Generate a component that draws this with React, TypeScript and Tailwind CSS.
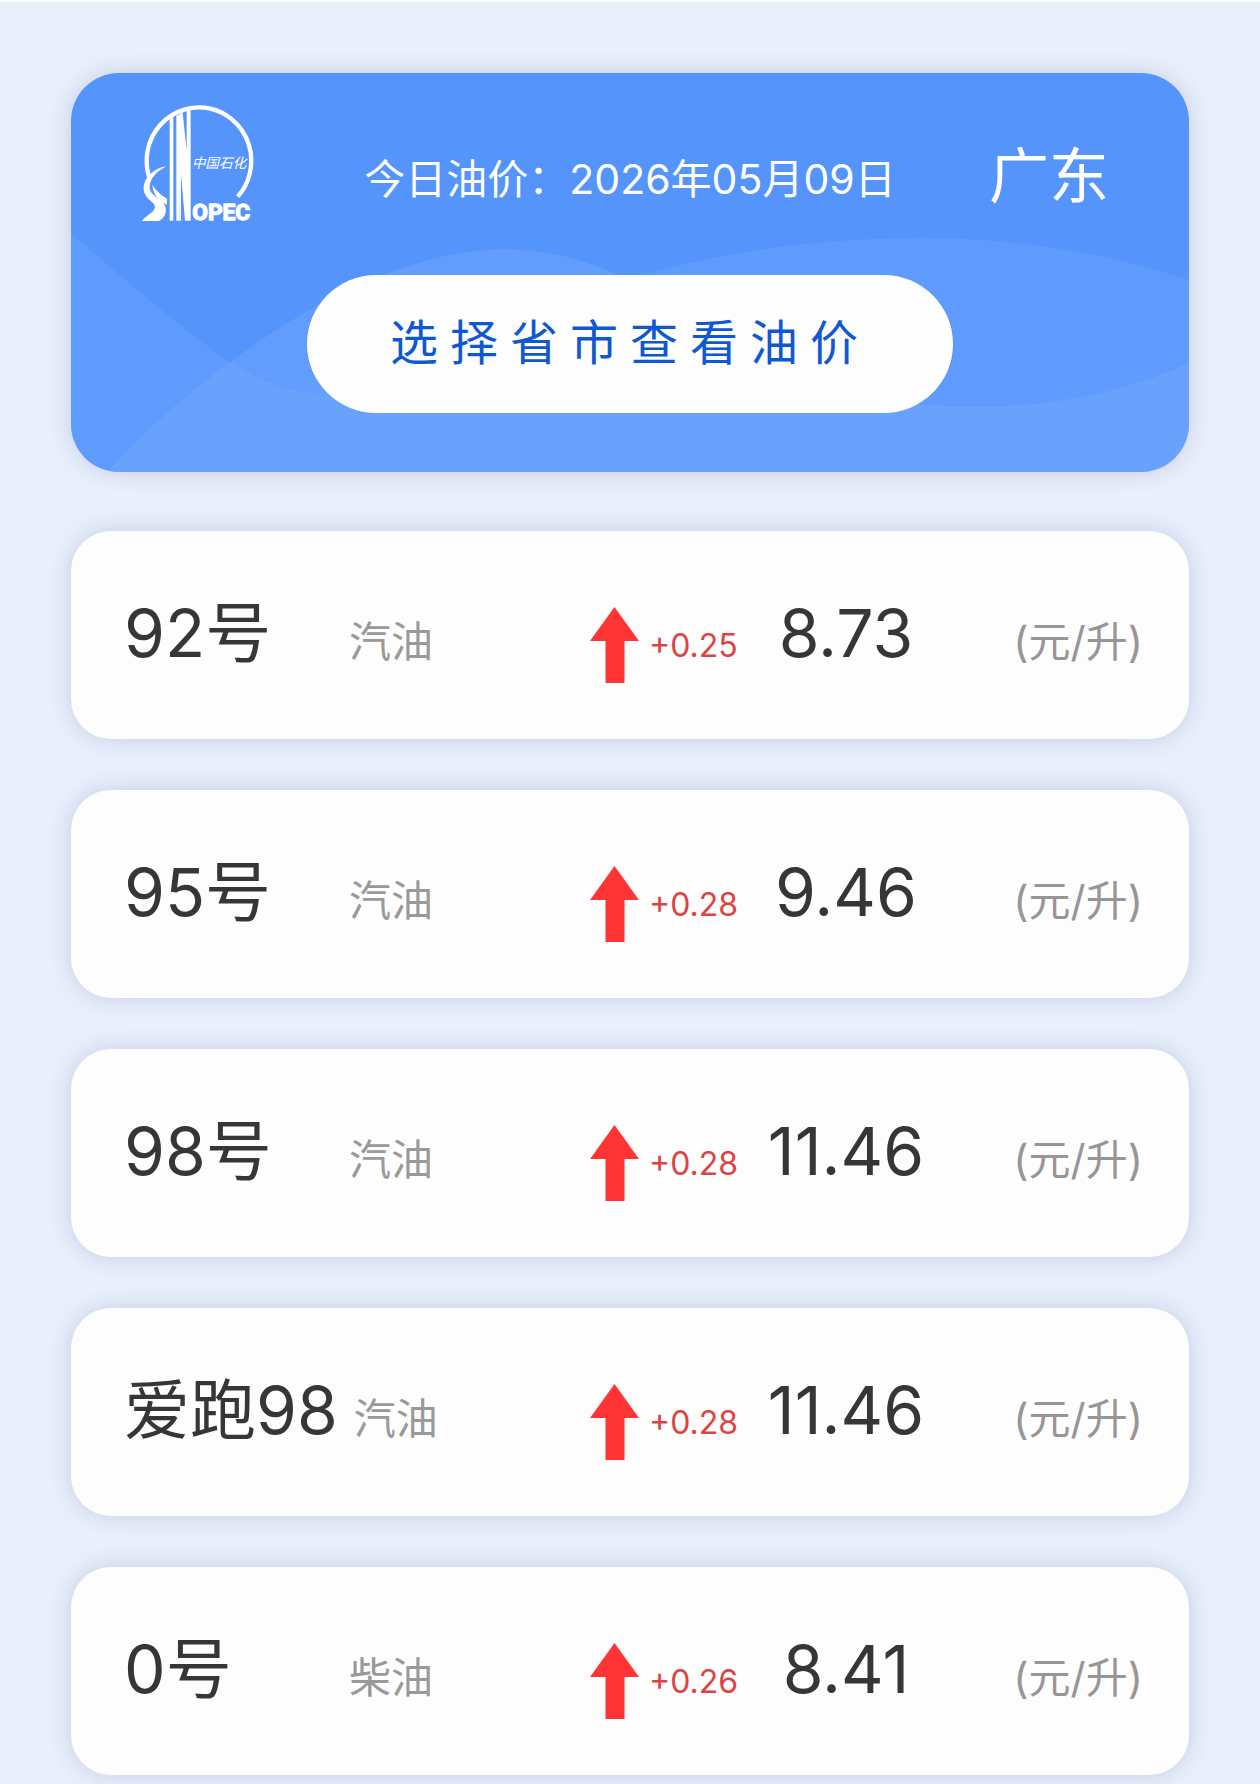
const prices = [
  { name: "92号", kind: "汽油", change: "+0.25", price: "8.73" },
  { name: "95号", kind: "汽油", change: "+0.28", price: "9.46" },
  { name: "98号", kind: "汽油", change: "+0.28", price: "11.46" },
  { name: "爱跑98", kind: "汽油", change: "+0.28", price: "11.46" },
  { name: "0号", kind: "柴油", change: "+0.26", price: "8.41" },
];

function Logo() {
  return (
    <svg viewBox="60 46 339 345" className="h-[115px] w-[113px] overflow-visible" fill="none" role="img" aria-label="中国石化">
      {/* ring, open at the bottom */}
      <path d="M84 258 A157 160 0 1 1 350 318" stroke="#fff" strokeWidth="13" />
      {/* tall bars */}
      <path d="M146 84 L157 78 V390 H146 Z M166 74 H176 V390 H166 Z" fill="#fff" />
      <path d="M172 72 L185 66 L197 180 V62 L209 58 V390 H192 L180 250 V390 H176 Z" fill="#fff" />
      {/* swoosh */}
      <path d="M136 227 C100 232 66 262 68 296 C70 326 102 334 102 348 C100 366 82 368 62 391 H114 C140 376 142 346 118 328 C94 312 80 300 88 276 C94 256 112 240 136 227 Z" fill="#fff" />
      <path d="M94 282 C106 300 118 312 138 324 V342 C112 330 96 312 94 282 Z" fill="#fff" />
      <text x="214" y="387" fontSize="68" fontWeight="700" fill="#fff" stroke="#fff" strokeWidth="4" className="font-['Roboto',sans-serif]">
        OPEC
      </text>
      <text x="212" y="232" fontSize="41" fill="#fff" className="font-['Noto_Sans_CJK_SC',sans-serif] italic">
        中国石化
      </text>
    </svg>
  );
}

function Waves() {
  return (
    <svg viewBox="0 0 1118 399" preserveAspectRatio="none" className="absolute inset-0 h-full w-full" aria-hidden="true">
      <path
        d="M0 160 C60 212 110 255 159 289 C190 308 215 318 246 320 C350 326 440 240 578 200 C670 175 760 165 851 165 C950 165 1040 181 1118 207 V399 H0 Z"
        fill="#71aaff"
        fillOpacity="0.34"
      />
      <path
        d="M36 399 C75 356 115 322 159 289 C210 251 260 222 317 200 C400 169 470 168 543 200 C640 242 730 328 855 332 C960 340 1048 322 1118 290 V399 Z"
        fill="#8cb4ff"
        fillOpacity="0.26"
      />
    </svg>
  );
}

export default function App() {
  return (
    <main className="min-h-screen border-t-2 border-white bg-[#e9effb] px-[71px] pt-[71px] pb-2 font-['Inter','Noto_Sans_CJK_SC',sans-serif] text-[#363636]">
      <header className="relative overflow-hidden rounded-[48px] bg-[#5494fb] pt-[33px] pb-[59px] text-white shadow-[0_0_22px_rgba(70,90,150,0.22)]">
        <Waves />
        <div className="relative grid grid-cols-[1fr_auto_1fr] items-center px-[70px]">
          <Logo />
          <p className="pt-8 text-[41px] leading-none">今日油价：2026年05月09日</p>
          <h1 className="justify-self-end pt-6 pr-2.5 text-[60px] leading-none">广东</h1>
        </div>
        <button
          type="button"
          className="relative mx-auto mt-[54px] block h-[138px] w-[646px] max-w-full rounded-full bg-[#fdfdfd] pb-0.5 text-[48px] leading-none tracking-[0.25em] text-[#0f58d2]"
        >
          选择省市查看油价
        </button>
      </header>

      <ul className="mt-[59px] space-y-[51px]">
        {prices.map((p) => (
          <li
            key={p.name}
            className="flex min-h-52 items-baseline rounded-[40px] bg-[#fdfdfd] pt-[69px] pr-[46px] pl-[53px] leading-none shadow-[0_0_22px_rgba(70,90,150,0.22)]"
          >
            <div className="flex flex-1 items-baseline gap-4">
              <h2 className="min-w-[209px] text-[66px] whitespace-nowrap">{p.name}</h2>
              <span className="text-[42px] text-[#999]">{p.kind}</span>
            </div>
            <svg viewBox="0 0 49 76" className="mt-[7px] h-[76px] w-[49px] shrink-0 self-start" aria-hidden="true">
              <path d="M24.500 0 L49 34 H34.500 V76 H15.500 V34 H0 Z" fill="#ff3535" />
            </svg>
            <span className="w-[101px] pl-2.5 text-[32px] text-[#dc4444]">{p.change}</span>
            <strong className="w-[212px] text-center text-[66px] font-normal">{p.price}</strong>
            <span className="w-[191px] text-right text-[42px] text-[#999595]">(元/升)</span>
          </li>
        ))}
      </ul>
    </main>
  );
}
